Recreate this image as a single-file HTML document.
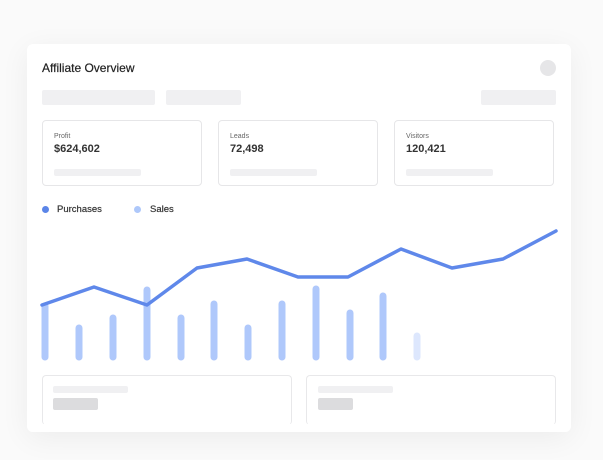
<html><head><style>
body{margin:0;width:603px;height:460px;background:#fafafa;font-family:"Liberation Sans",sans-serif;position:relative;overflow:hidden}
.card{position:absolute;left:27px;top:44px;width:544px;height:388px;background:#fff;border-radius:6px;box-shadow:0 6px 30px rgba(0,0,0,.06)}
.a{position:absolute}
.sk{position:absolute;background:#f0f0f2;border-radius:2px}
.st{position:absolute;top:120px;height:66px;width:160px;border:1px solid #e6e6e8;border-radius:4px;box-sizing:border-box}
.st .l{position:absolute;left:11px;top:12px;font-size:7px;color:#666}
.st .v{position:absolute;left:11px;top:22px;font-size:11px;font-weight:bold;color:#333}
.st .b{position:absolute;left:11px;top:48px;width:87px;height:7px;background:#f0f0f2;border-radius:2px}
.bc{position:absolute;top:375px;height:60px;width:250px;border:1px solid #e8e8ea;border-radius:4px;box-sizing:border-box}
</style></head><body>
<div class="card"></div>
<div class="a" style="left:42px;top:61px;font-size:12px;color:#222;-webkit-text-stroke:0.2px #222">Affiliate Overview</div>
<div class="a" style="left:540px;top:60px;width:16px;height:16px;border-radius:50%;background:#e6e6e8"></div>
<div class="sk" style="left:42px;top:90px;width:113px;height:15px"></div>
<div class="sk" style="left:166px;top:90px;width:75px;height:15px"></div>
<div class="sk" style="left:481px;top:90px;width:75px;height:15px"></div>
<div class="st" style="left:42px"><div class="l">Profit</div><div class="v">$624,602</div><div class="b"></div></div>
<div class="st" style="left:218px"><div class="l">Leads</div><div class="v">72,498</div><div class="b"></div></div>
<div class="st" style="left:394px"><div class="l">Visitors</div><div class="v">120,421</div><div class="b"></div></div>
<div class="a" style="left:42px;top:206px;width:7px;height:7px;border-radius:50%;background:#5b85e8"></div>
<div class="a" style="left:57px;top:204px;font-size:9.5px;color:#333;-webkit-text-stroke:0.2px #333">Purchases</div>
<div class="a" style="left:134px;top:206px;width:7px;height:7px;border-radius:50%;background:#aec8fa"></div>
<div class="a" style="left:150px;top:204px;font-size:9.5px;color:#333;-webkit-text-stroke:0.2px #333">Sales</div>
<svg class="a" style="left:0;top:0" width="603" height="460">
<g stroke-linecap="round" stroke-width="7" stroke="#afc8fb">
<line x1="45" y1="306" x2="45" y2="357"/><line x1="79" y1="328" x2="79" y2="357"/><line x1="113" y1="318" x2="113" y2="357"/><line x1="147" y1="290" x2="147" y2="357"/><line x1="181" y1="318" x2="181" y2="357"/><line x1="214" y1="304" x2="214" y2="357"/><line x1="248" y1="328" x2="248" y2="357"/><line x1="282" y1="304" x2="282" y2="357"/><line x1="316" y1="289" x2="316" y2="357"/><line x1="350" y1="313" x2="350" y2="357"/><line x1="383" y1="296" x2="383" y2="357"/><line x1="417" y1="336" x2="417" y2="357" stroke="#dde7fd"/>
</g>
<polyline fill="none" stroke="#5f88ea" stroke-width="3.5" stroke-linejoin="round" stroke-linecap="round" points="42,305 94,287 147,305 197,268 247,259 298,277 348,277 401,249 452,268 503,259 556,231"/>
</svg>
<div class="bc" style="left:42px;height:50px;border-bottom:none"></div>
<div class="bc" style="left:306px;height:50px;border-bottom:none"></div>
<div class="sk" style="left:53px;top:386px;width:75px;height:7px"></div>
<div class="a" style="left:53px;top:398px;width:45px;height:12px;background:#dcdcde;border-radius:2px"></div>
<div class="sk" style="left:318px;top:386px;width:75px;height:7px"></div>
<div class="a" style="left:318px;top:398px;width:35px;height:12px;background:#dcdcde;border-radius:2px"></div>
<div class="a" style="left:27px;top:424px;width:544px;height:8px;background:#fff;border-radius:0 0 6px 6px"></div>
</body></html>
